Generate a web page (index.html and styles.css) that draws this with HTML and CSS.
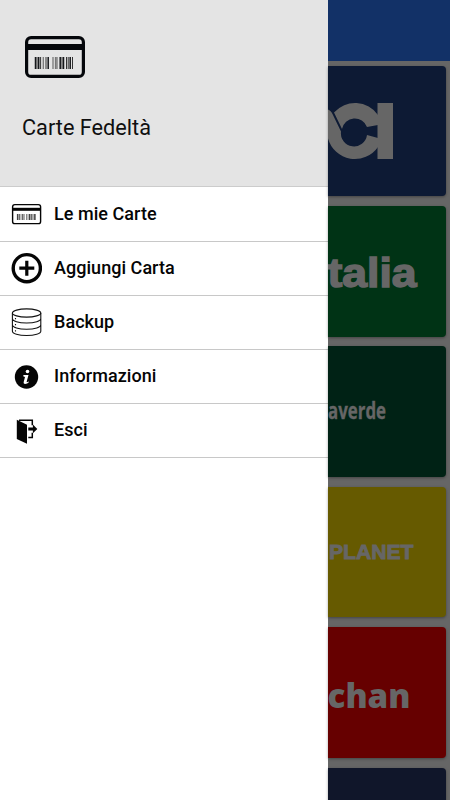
FILE: index.html
```html
<!DOCTYPE html>
<html lang="it">
<head>
<meta charset="utf-8">
<title>Carte Fedeltà</title>
<link rel="stylesheet" href="styles.css">
</head>
<body>
<div class="screen">
  <aside class="drawer">
    <header class="drawer-head">
      <svg class="logo" viewBox="0 0 60 42">
        <rect x="1.6" y="1.6" width="56.800" height="38.800" rx="4.500" fill="none" stroke="#05070b" stroke-width="3.200"/>
        <path d="M2 8h56v6H2z" fill="#05070b"/>
        <path d="M10.500 21v12M13.700 21v12M23.200 21v12M35.200 21v12M38.500 21v12M45.200 21v12" stroke="#15171a" stroke-width="1.500"/>
        <path d="M12 21v12M15.600 21v12M21 21v12M37 21v12M41.500 21v12M43.200 21v12M47.500 21v12" stroke="#333" stroke-width="1"/>
        <path d="M18.300 21v12M28 21v12M30.500 21v12M32 21v12" stroke="#777" stroke-width="1.300"/>
      </svg>
      <h1 class="title">Carte Fedeltà</h1>
    </header>
    <nav class="menu">
      <a class="item">
        <svg class="icon" viewBox="0 0 32 32">
          <rect x="2.600" y="6.600" width="28" height="19" rx="2.200" fill="none" stroke="#050505" stroke-width="1.400"/>
          <path d="M2.500 9.800h28v3h-28z" fill="#050505"/>
          <path d="M7.500 16v6M9.200 16v6M12.800 16v6M19.500 16v6M21.200 16v6M24.300 16v6" stroke="#444" stroke-width="1.200"/>
          <path d="M11 16v6M14.200 16v6M16.500 16v6M18 16v6M22.800 16v6M25.500 16v6" stroke="#888" stroke-width="1"/>
        </svg>
        <span>Le mie Carte</span>
      </a>
      <a class="item">
        <svg class="icon" viewBox="0 0 32 32">
          <circle cx="16.800" cy="16.200" r="13.600" fill="none" stroke="#050505" stroke-width="3.400"/>
          <path d="M16.800 8.700v15M9.300 16.200h15" stroke="#050505" stroke-width="3.200"/>
        </svg>
        <span>Aggiungi Carta</span>
      </a>
      <a class="item">
        <svg class="icon" viewBox="0 0 32 32" fill="none" stroke="#111" stroke-width="1.100">
          <ellipse cx="16.600" cy="7" rx="14.200" ry="4.100"/>
          <path d="M2.400 7v18.200c0 2.300 6 4.300 14.200 4.300s14.200-2 14.200-4.300V7M2.400 12.500c0 2.500 6 4.500 14.200 4.500s14.200-2 14.200-4.500M2.400 18.800c0 2.500 6 4.500 14.200 4.500s14.200-2 14.200-4.500"/>
          <path d="M5.500 12v1.200M5.500 18v1.200M5.500 24.200v1.200"/>
        </svg>
        <span>Backup</span>
      </a>
      <a class="item">
        <svg class="icon" viewBox="0 0 32 32">
          <circle cx="16.500" cy="16" r="11.700" fill="#050505"/>
          <circle cx="17.500" cy="10.500" r="1.800" fill="#fff"/>
          <path d="M13.500 13.900h5l-1.800 6.700c-.2.800.5.800 1.800-.2l.5.500c-1.500 2-6 3.200-5.300.2l1.300-5-1.800-.8z" fill="#fff"/>
        </svg>
        <span>Informazioni</span>
      </a>
      <a class="item">
        <svg class="icon" viewBox="0 0 32 32">
          <path d="M6.800 4.800l10.200 5v19L6.800 24z" fill="#050505"/>
          <path d="M9 5.200h13.300v5M22.300 17.800v4.800h-4" fill="none" stroke="#050505" stroke-width="1.500"/>
          <path d="M18.300 12.400h4.600V9.600l4.400 4.400-4.400 4.200v-2.800h-4.600z" fill="#050505"/>
        </svg>
        <span>Esci</span>
      </a>
    </nav>
  </aside>
  <main class="content">
    <div class="toolbar"></div>
    <div class="cards">
      <section class="card navy">
        <svg class="brand" viewBox="0 0 118 130.500">
          <g fill="#666">
            <path d="M49.500 37h15.500v56H49.500z"/>
            <path d="M6 46.500A28 28 0 0 1 50 49V59L39 61A13 13 0 0 0 14 63z"/>
            <path d="M0 43.500C2 44 3.500 46 4.500 48L13 65.500A13 13 0 0 0 39 69L50 72V81A28 28 0 0 1 0 72.500z"/>
          </g>
        </svg>
      </section>
      <section class="card green">
        <svg class="brand" viewBox="0 0 118 130.500"><text x="-.5" y="80.500" textLength="89" lengthAdjust="spacingAndGlyphs" class="word talia">talia</text></svg>
      </section>
      <section class="card forest">
        <svg class="brand" viewBox="0 0 118 130.500"><text x="0" y="73" textLength="58" lengthAdjust="spacingAndGlyphs" class="word verde">averde</text></svg>
      </section>
      <section class="card yellow">
        <svg class="brand" viewBox="0 0 118 130.500"><text x="1" y="72" textLength="84.500" lengthAdjust="spacingAndGlyphs" class="word planet">PLANET</text></svg>
      </section>
      <section class="card red">
        <svg class="brand" viewBox="0 0 118 130.500"><text x="-.5" y="81" textLength="83" lengthAdjust="spacingAndGlyphs" class="word chan">chan</text></svg>
      </section>
      <section class="card night"></section>
    </div>
  </main>
</div>
</body>
</html>
```
FILE: styles.css
```css
* { box-sizing: border-box; }
body { margin: 0; font-family: Roboto, "Liberation Sans", sans-serif; }
.screen { display: flex; width: 450px; height: 800px; overflow: hidden; background: #666; }
.drawer { flex: none; width: 328.400px; background: #fff; }
.drawer-head { height: 187.400px; padding: 36px 22px 0 25px; background: #e4e4e4; border-bottom: 1px solid #ccc; }
.logo { display: block; width: 60px; height: 42px; }
.title { margin: 37px 0 0 -3px; font-size: 21.700px; line-height: 26px; font-weight: 400; letter-spacing: 0; color: #101010; }
.item { display: flex; align-items: center; height: 54.200px; padding-left: 10px; gap: 12px; border-bottom: 1px solid #c8c8c8; font-size: 18px; font-weight: 500; letter-spacing: .04px; color: #050505; }
.item span { line-height: 20px; padding-bottom: .6px; }
.icon { width: 32px; height: 32px; flex: none; }
.content { flex: 1; min-width: 0; }
.toolbar { height: 61px; background: #123167; }
.cards { display: flex; flex-direction: column; gap: 9.800px; padding: 4.600px 4px 0 0; }
.card { flex: none; height: 130.600px; border-radius: 0 4px 4px 0; box-shadow: 0 1px 3px rgba(0, 0, 0, .35); overflow: hidden; }
.brand { display: block; width: 118px; height: 130.500px; }
.word { fill: #666; font-family: "Open Sans", sans-serif; font-weight: 800; }
.talia { font-family: "Liberation Sans", sans-serif; font-weight: 700; font-size: 40px; stroke: #666; stroke-width: 1.500px; }
.verde { font-size: 24px; font-weight: 700; stroke: #666; stroke-width: .4px; }
.planet { font-family: "Liberation Sans", sans-serif; font-size: 20px; stroke: #666; stroke-width: .9px; }
.chan { font-size: 34px; }
.navy { background: #0d1a34; }
.green { background: #003315; }
.forest { background: #002215; }
.yellow { background: #665a00; }
.red { background: #660000; }
.night { background: #10162a; }
```
